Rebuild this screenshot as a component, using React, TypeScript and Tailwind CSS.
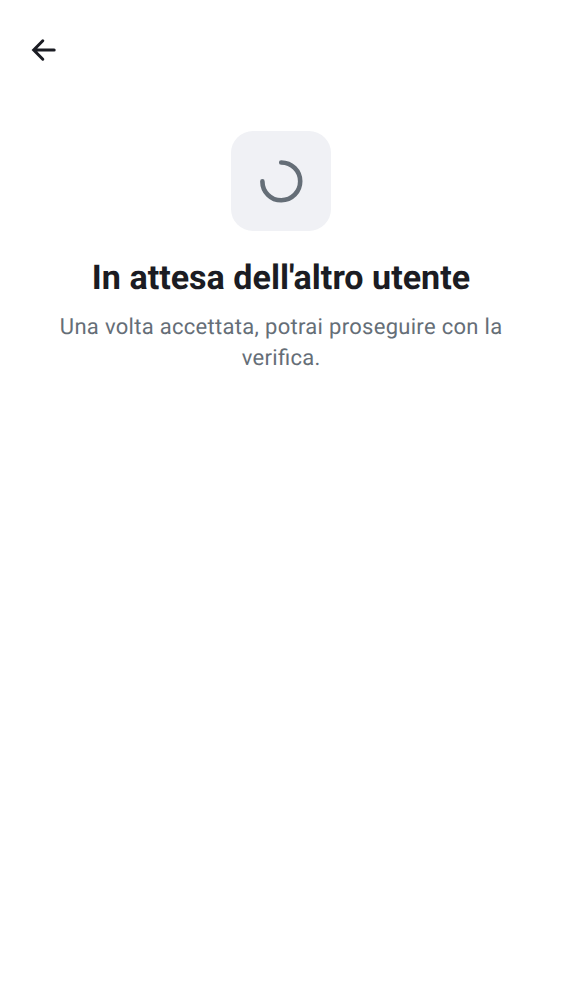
export default function App() {
  return (
    <main className="flex min-h-screen flex-col bg-white font-['Roboto',sans-serif] [text-rendering:geometricPrecision]">
      <header className="flex h-[100px] items-center pl-[31px]">
        <button aria-label="Indietro" className="h-6 w-[26px]">
          <svg width="26" height="24" viewBox="0 0 26 24" fill="none" stroke="#1b1c23" strokeWidth="3" strokeLinecap="round">
            <path d="M23.2 12H3M11.8 2.8L2.7 12l9.1 9.2" />
          </svg>
        </button>
      </header>
      <section className="flex flex-col items-center pt-[31px] text-center">
        <div className="flex size-[100px] items-center justify-center rounded-[22px] bg-[#f0f1f5]">
          <svg width="44" height="44" viewBox="0 0 44 44" fill="none" stroke="#656e77" strokeWidth="4.6" strokeLinecap="round">
            <path d="M22.2 3.5A18.9 18.9 0 1 1 3.4 22.4" />
          </svg>
        </div>
        <h1 className="mt-[27px] text-[34.1px] leading-10 font-bold whitespace-nowrap text-[#1b1c23]">In attesa dell'altro utente</h1>
        <p className="mt-[14px] pl-[0.3px] text-[22px] leading-[31px] tracking-[0.3px] whitespace-nowrap text-[#656e77] [font-feature-settings:'liga']">
          Una volta accettata, potrai proseguire con la
          <br />
          verifica.
        </p>
      </section>
    </main>
  );
}
